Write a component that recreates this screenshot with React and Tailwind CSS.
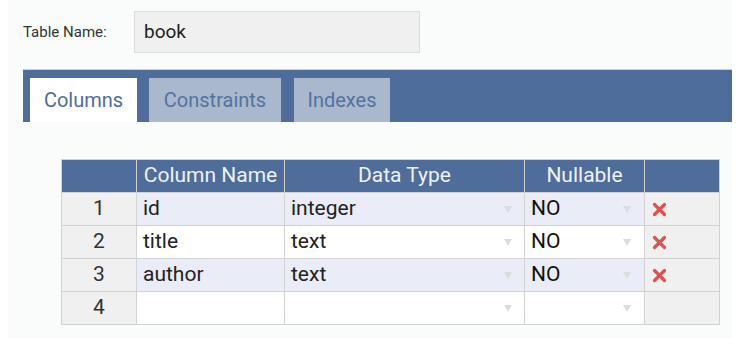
import React from "react";

const rows = [
  { n: 1, name: "id", type: "integer", nul: "NO", del: true, alt: true },
  { n: 2, name: "title", type: "text", nul: "NO", del: true, alt: false },
  { n: 3, name: "author", type: "text", nul: "NO", del: true, alt: true },
  { n: 4, name: "", type: "", nul: "", del: false, alt: false },
];

function Arrow() {
  return (
    <svg width="8" height="7" viewBox="0 0 8 7" className="shrink-0">
      <path d="M0 0 L8 0 L4 7 Z" fill="#dcdcdc" />
    </svg>
  );
}

function XIcon() {
  return (
    <svg width="15" height="15" viewBox="0 0 15 15">
      <path d="M2.5 2.5 L12.5 12.5 M12.5 2.5 L2.5 12.5" stroke="#d9534f" strokeWidth="3.2" strokeLinecap="round" />
    </svg>
  );
}

export default function App() {
  return (
    <div className="w-[748px] h-[352px] bg-white" style={{ fontFamily: "Roboto, 'Liberation Sans', sans-serif" }}>
      <div className="ml-[8px] w-[724px] h-[338px] bg-[#fafcfc] pt-[11px]">
        <div className="flex items-center pl-[15px]">
          <span className="w-[111px] text-[15px] text-[#333]">Table Name:</span>
          <div className="w-[286px] h-[42px] bg-[#f0f0f0] border border-[#dcdcdc] flex items-center pl-[9px] text-[19px] text-[#222]">
            book
          </div>
        </div>
        <div className="ml-[15px] mt-[16px] h-[53px] bg-[#4e6d9b] border-t border-[#c9d1dd] flex items-end pl-[7px] gap-[12px]">
          <div className="w-[107px] h-[44px] bg-white flex items-center justify-center text-[20px] text-[#4e6d9b]">Columns</div>
          <div className="w-[132px] h-[44px] bg-[#a9b8cd] flex items-center justify-center text-[20px] text-[#55729f]">Constraints</div>
          <div className="w-[96px] h-[44px] ml-[1px] bg-[#a9b8cd] flex items-center justify-center text-[20px] text-[#55729f]">Indexes</div>
        </div>
        <div className="ml-[53px] mt-[37px] flex">
          <div className="grid grid-cols-[75px_148px_240px_120px_74px] border border-[#d2d2d2]">
            <div className="h-[32px] bg-[#4e6d9b] border-r border-[#d2d2d2]" />
            <div className="h-[32px] bg-[#4e6d9b] border-r border-[#d2d2d2] flex items-center justify-center text-[21px] text-[#eef2f7]">Column Name</div>
            <div className="h-[32px] bg-[#4e6d9b] border-r border-[#d2d2d2] flex items-center justify-center text-[21px] text-[#eef2f7]">Data Type</div>
            <div className="h-[32px] bg-[#4e6d9b] border-r border-[#d2d2d2] flex items-center justify-center text-[21px] text-[#eef2f7]">Nullable</div>
            <div className="h-[32px] bg-[#4e6d9b]" />
            {rows.map((r) => (
              <React.Fragment key={r.n}>
                <div className="h-[33px] bg-[#f0f0f0] border-t border-r border-[#d2d2d2] flex items-center justify-center text-[21px] text-[#333]">{r.n}</div>
                <div className={`h-[33px] ${r.alt ? "bg-[#eaecf8]" : "bg-white"} border-t border-r border-[#d2d2d2] flex items-center pl-[6px] text-[21px] text-[#222]`}>{r.name}</div>
                <div className={`h-[33px] ${r.alt ? "bg-[#eaecf8]" : "bg-white"} border-t border-r border-[#d2d2d2] flex items-center justify-between pl-[6px] pr-[12px] text-[21px] text-[#222]`}>
                  <span>{r.type}</span>
                  <Arrow />
                </div>
                <div className={`h-[33px] ${r.alt ? "bg-[#eaecf8]" : "bg-white"} border-t border-r border-[#d2d2d2] flex items-center justify-between pl-[6px] pr-[13px] text-[21px] text-[#111]`}>
                  <span>{r.nul}</span>
                  <Arrow />
                </div>
                <div className="h-[33px] bg-[#f0f0f0] border-t border-[#d2d2d2] flex items-center pl-[7px]">
                  {r.del && <XIcon />}
                </div>
              </React.Fragment>
            ))}
          </div>
        </div>
      </div>
    </div>
  );
}
